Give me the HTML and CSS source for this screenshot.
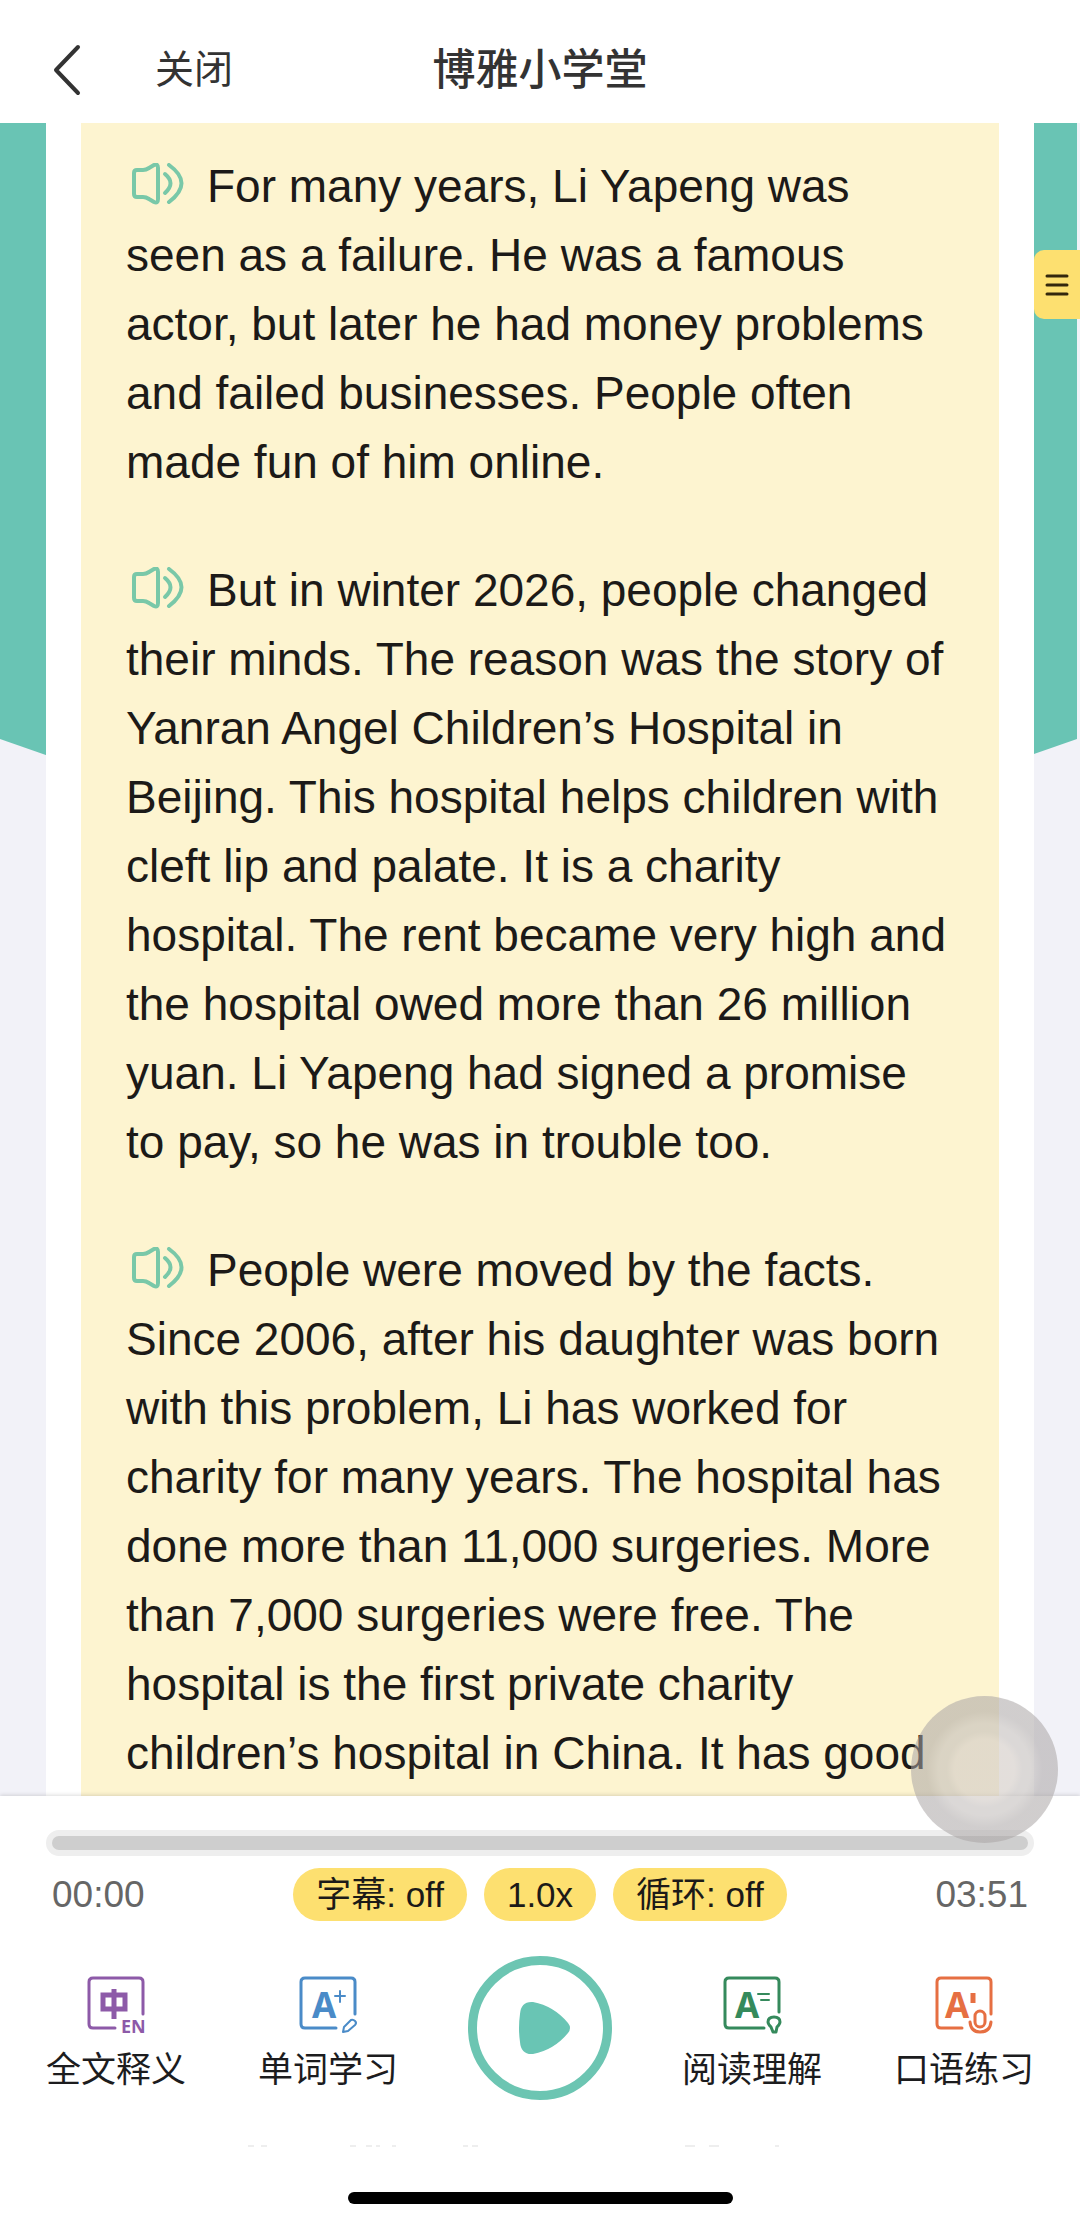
FILE: index.html
```html
<!DOCTYPE html>
<html lang="zh-CN">
<head>
    <meta charset="UTF-8">
    <meta name="viewport" content="width=device-width, initial-scale=1.0">
    <title>博雅小学堂</title>
    <link rel="stylesheet" href="styles.css">
</head>
<body>
    <!-- speaker icon shared by all paragraphs -->
    <svg class="sprite" aria-hidden="true">
        <symbol id="speaker" viewBox="0 0 52 42">
            <path d="M2 10 Q2 7 5 7 H11 Q14 7 17 5 L22 2 Q26 0 26 5 V36 Q26 41 22 39 L17 36 Q14 34 11 34 H5 Q2 34 2 31 Z"/>
            <path d="M33 11 Q44 20 33 30"/>
            <path d="M37 2 Q62 20 37 39"/>
        </symbol>
    </svg>

    <header class="navbar">
        <div class="nav-left">
            <button class="nav-btn" aria-label="返回">
                <svg class="back-icon" viewBox="0 0 30 52"><path d="M26 3 L4 26 L26 49"/></svg>
            </button>
            <button class="nav-btn">关闭</button>
        </div>
        <h1>博雅小学堂</h1>
    </header>

    <main class="reader">
        <div class="card">
            <article class="passage">
                <p><button class="speak" aria-label="朗读"><svg><use href="#speaker"/></svg></button>For many years, Li Yapeng was seen as a failure. He was a famous actor, but later he had money problems and failed businesses. People often made fun of him online.</p>
                <p><button class="speak" aria-label="朗读"><svg><use href="#speaker"/></svg></button>But in winter 2026, people changed their minds. The reason was the story of Yanran Angel Children’s Hospital in Beijing. This hospital helps children with cleft lip and palate. It is a charity hospital. The rent became very high and the hospital owed more than 26 million yuan. Li Yapeng had signed a promise to pay, so he was in trouble too.</p>
                <p><button class="speak" aria-label="朗读"><svg><use href="#speaker"/></svg></button>People were moved by the facts. Since 2006, after his daughter was born with this problem, Li has worked for charity for many years. The hospital has done more than 11,000 surgeries. More than 7,000 surgeries were free. The hospital is the first private charity children’s hospital in China. It has good</p>
            </article>
        </div>
        <button class="menu-btn" aria-label="目录">
            <svg viewBox="0 0 24 22"><path d="M2 2H22M2 11H22M2 20H22"/></svg>
        </button>
    </main>

    <footer class="player">
        <input class="progress" type="range" min="0" max="231" value="0" aria-label="播放进度">
        <div class="status">
            <span class="time">00:00</span>
            <div class="options">
                <button class="pill">字幕: off</button>
                <button class="pill">1.0x</button>
                <button class="pill">循环: off</button>
            </div>
            <span class="time">03:51</span>
        </div>
        <nav class="tools">
            <button class="tool purple">
                <svg viewBox="0 0 58 58">
                    <path d="M28 52H6Q2 52 2 48V6Q2 2 6 2H52Q56 2 56 6V38"/>
                    <path class="bold" d="M16 19H38V33H16ZM27 13V43"/>
                    <text class="en" x="34" y="57">EN</text>
                </svg>
                <span>全文释义</span>
            </button>
            <button class="tool blue">
                <svg viewBox="0 0 58 58">
                    <path d="M37 52H6Q2 52 2 48V6Q2 2 6 2H52Q56 2 56 6V38"/>
                    <text class="letter" x="13" y="42">A</text>
                    <path class="thin" d="M41 15V26M36 20H46"/>
                    <path class="thin" d="M44 56L45 51L52 44Q54 43 56 45Q58 47 56 49L49 55Z"/>
                </svg>
                <span>单词学习</span>
            </button>
            <button class="play" aria-label="播放">
                <svg viewBox="0 0 54 56"><path d="M2 14Q3 1 15 2Q36 6 50 23Q54 28 50 33Q36 50 15 54Q3 55 2 42Q0 28 2 14Z"/></svg>
            </button>
            <button class="tool green">
                <svg viewBox="0 0 58 58">
                    <path d="M41 52H6Q2 52 2 48V6Q2 2 6 2H52Q56 2 56 6V36"/>
                    <text class="letter" x="12" y="42">A</text>
                    <path class="thin" d="M35 18H46M38 24H46"/>
                    <path d="M48 51Q45 48 45 46Q45 41 51 41Q57 41 57 46Q57 48 54 51L53 56H50Z"/>
                </svg>
                <span>阅读理解</span>
            </button>
            <button class="tool orange">
                <svg viewBox="0 0 58 58">
                    <path d="M27 52H6Q2 52 2 48V6Q2 2 6 2H52Q56 2 56 6V38"/>
                    <text class="letter" x="10" y="42">A</text>
                    <path class="bold" d="M38 17V27"/>
                    <rect x="40" y="35" width="10" height="16" rx="5"/>
                    <path d="M35 46Q36 56 45 56Q55 56 56 46"/>
                </svg>
                <span>口语练习</span>
            </button>
        </nav>
        <!-- tips of the line that is cut off below the tools -->
        <svg class="cutoff" viewBox="0 0 540 4" aria-hidden="true">
            <path d="M-22 2h6M-9 2h6M80 2h6M96 2h6M106 2h4M122 2h4M193 2h5M202 2h6M415 2h10M439 2h10M505 2h4"/>
        </svg>
        <div class="home-bar"></div>
    </footer>

    <button class="assistive" aria-label="悬浮按钮"></button>
</body>
</html>
```
FILE: styles.css
```css
* {
    box-sizing: border-box;
}

body {
    margin: 0;
    height: 100vh;
    display: flex;
    flex-direction: column;
    background-color: #fff;
    color: #1c1a18;
    font-family: "Liberation Sans", "Noto Sans CJK SC", sans-serif;
    overflow: hidden;
}

button {
    margin: 0;
    padding: 0;
    border: none;
    background: none;
    color: inherit;
    font: inherit;
    cursor: pointer;
}

svg {
    fill: none;
    stroke: currentColor;
    stroke-linecap: round;
    stroke-linejoin: round;
}

.sprite {
    display: none;
}

/* top bar */
.navbar {
    display: grid;
    grid-template-columns: 1fr auto 1fr;
    align-items: center;
    padding: 38px 52px 21px;
    color: #333;
}

.navbar h1 {
    margin: 0;
    font-size: 43px;
    line-height: 64px;
    font-weight: 500;
}

.nav-left {
    display: flex;
    align-items: center;
    gap: 73px;
}

.nav-btn {
    font-size: 39px;
    line-height: 64px;
}

.back-icon {
    display: block;
    width: 30px;
    height: 52px;
    stroke-width: 4;
}

/* reading area */
.reader {
    flex: 1;
    min-height: 0;
    position: relative;
    padding: 0 46px;
    background-color: #f2f2f8;
    overflow: hidden;
}

.reader::before {
    content: "";
    position: absolute;
    inset: 0 3px 0 0;
    background-color: #69c4b4;
    clip-path: polygon(0 0, 100% 0, 100% 616px, 50% 804px, 0 616px);
}

.card {
    position: relative;
    padding: 0 35px;
    background-color: #fff;
}

.passage {
    padding: 29px 45px;
    background-color: #fdf4d0;
    font-size: 46px;
    line-height: 69px;
}

.passage p {
    margin: 0 0 59px;
}

.speak {
    margin: 0 23px 0 6px;
    color: #79c8a8;
    vertical-align: -3px;
}

.speak svg {
    display: block;
    width: 52px;
    height: 42px;
    stroke-width: 4;
}

.menu-btn {
    position: absolute;
    top: 127px;
    right: 0;
    width: 46px;
    height: 69px;
    padding-left: 11px;
    border-radius: 10px 0 0 10px;
    background-color: #fde070;
    color: #33270c;
}

.menu-btn svg {
    display: block;
    width: 24px;
    height: 22px;
    stroke-width: 3;
}

/* player */
.player {
    position: relative;
    padding: 34px 46px 20px;
    background-color: #fff;
    box-shadow: 0 -1px 4px rgba(0, 0, 0, 0.14);
}

.progress {
    display: block;
    width: 100%;
    height: 26px;
    margin: 0;
    border: 6px solid #eee;
    border-radius: 13px;
    background-color: #cecece;
    appearance: none;
}

.progress::-webkit-slider-thumb {
    appearance: none;
    width: 0;
    height: 0;
}

.status {
    display: flex;
    justify-content: space-between;
    align-items: center;
    padding: 12px 6px 0;
}

.time {
    color: #666;
    font-size: 37px;
}

.options {
    display: flex;
    gap: 17px;
}

.pill {
    height: 53px;
    padding: 0 23px;
    border-radius: 27px;
    background-color: #fde070;
    font-size: 35px;
    line-height: 53px;
}

.tools {
    display: grid;
    grid-template-columns: repeat(5, 1fr);
    align-items: start;
    justify-items: center;
    margin: 35px -36px 0;
}

.tool {
    display: flex;
    flex-direction: column;
    align-items: center;
    gap: 10px;
    padding-top: 20px;
    font-size: 35px;
    line-height: 52px;
}

.tool svg {
    width: 58px;
    height: 58px;
    stroke-width: 3;
    overflow: visible;
}

.tool span {
    color: #1c1c1e;
}

.tool .thin {
    stroke-width: 2;
}

.tool .bold {
    stroke-width: 5;
    stroke-linecap: butt;
    stroke-linejoin: miter;
}

.tool text {
    fill: currentColor;
    stroke: none;
    font-family: "Noto Sans", sans-serif;
    font-weight: 700;
}

.tool .en {
    font-size: 18px;
}

.tool .letter {
    font-size: 35px;
}

.purple {
    color: #8d5aa8;
}

.blue {
    color: #4a8bc8;
}

.green {
    color: #358a5c;
}

.orange {
    color: #e66f42;
}

.play {
    display: flex;
    align-items: center;
    justify-content: center;
    width: 144px;
    height: 144px;
    padding-left: 10px;
    border: 9px solid #6cc5b2;
    border-radius: 50%;
    color: #69c5b4;
}

.play svg {
    width: 54px;
    height: 56px;
    fill: currentColor;
    stroke: none;
}

.cutoff {
    display: block;
    width: 540px;
    height: 4px;
    margin: 44px auto;
    color: #ddd;
    stroke-width: 1;
    stroke-linecap: butt;
    overflow: visible;
}

.home-bar {
    width: 385px;
    height: 12px;
    margin: 0 auto;
    border-radius: 6px;
    background-color: #000;
}

/* floating button over the page */
.assistive {
    position: absolute;
    right: 22px;
    bottom: 381px;
    width: 147px;
    height: 147px;
    border-radius: 50%;
    background: radial-gradient(circle, rgba(212, 205, 200, 0.65) 0 30px, rgba(195, 190, 188, 0.6) 38px 46px, rgba(170, 165, 165, 0.55) 58px);
}
```
